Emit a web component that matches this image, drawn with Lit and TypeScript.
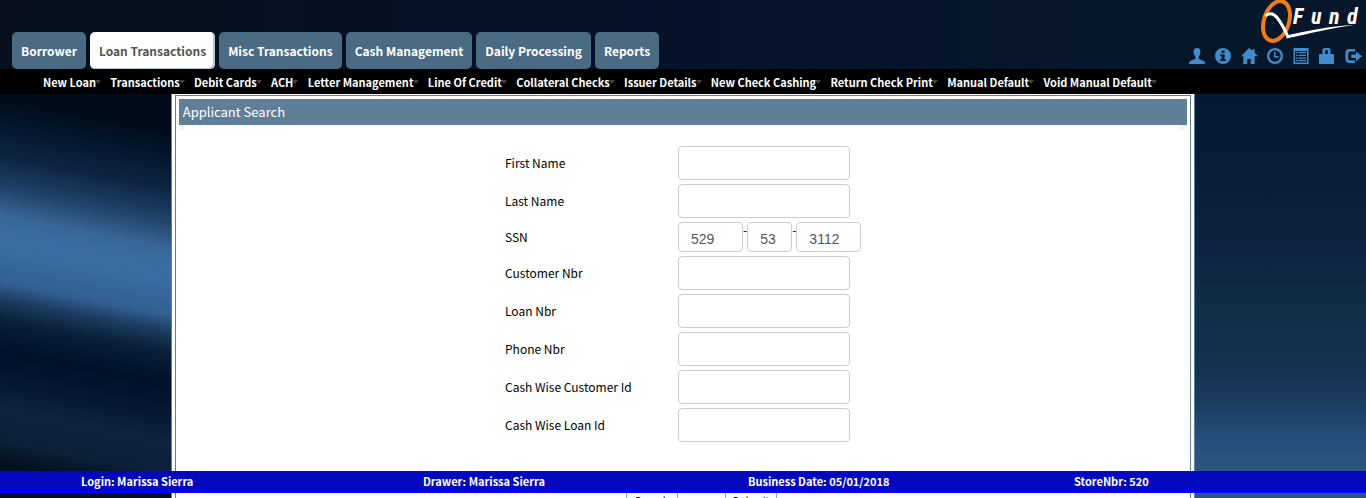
import { LitElement, html, css, svg } from "lit";
import { customElement, state } from "lit/decorators.js";
import { classMap } from "lit/directives/class-map.js";

const TABS = ["Borrower", "Loan Transactions", "Misc Transactions", "Cash Management", "Daily Processing", "Reports"];

const MENU = [
  "New Loan", "Transactions", "Debit Cards", "ACH", "Letter Management", "Line Of Credit",
  "Collateral Checks", "Issuer Details", "New Check Cashing", "Return Check Print",
  "Manual Default", "Void Manual Default",
];

const FIELDS_TOP = [["first", "First Name"], ["last", "Last Name"]];
const FIELDS_BOTTOM = [
  ["customer", "Customer Nbr"],
  ["loan", "Loan Nbr"],
  ["phone", "Phone Nbr"],
  ["cwCustomer", "Cash Wise Customer Id"],
  ["cwLoan", "Cash Wise Loan Id"],
];

const ICONS = [
  { name: "Customer", shape: svg`<path d="M8 0C5.600 0 4.600 1.600 4.600 4c0 2 .7 3.500 1.700 4.600v2.200L1.200 13C.3 13.500 0 14.200 0 16h16c0-1.800-.3-2.500-1.200-3l-5.100-2.200V8.600C10.700 7.500 11.400 6 11.400 4 11.400 1.600 10.400 0 8 0z"/>` },
  { name: "Information", shape: svg`<path fill-rule="evenodd" d="M8 0a8 8 0 1 0 0 16A8 8 0 0 0 8 0zM6.500 2.600h3v2.300h-3zM5 6.200h4.600v5.200H11V13H5v-1.600h1.500V7.800H5z"/>` },
  { name: "Home", shape: svg`<path d="M8 0 0 8.300h2.300V16h4v-5h3.400v5h4V8.300H17l-3.300-3.500V1.300h-2.200v1.400z"/>` },
  { name: "Clock", shape: svg`<path fill-rule="evenodd" d="M8 0a8 8 0 1 0 0 16A8 8 0 0 0 8 0zm0 2.300a5.700 5.700 0 1 1 0 11.400A5.700 5.700 0 0 1 8 2.300zM7 4h1.600v3.900h3.100v1.500H7z"/>` },
  { name: "List", shape: svg`<path fill-rule="evenodd" d="M.5 0h15v16H.5zM2 3v11.500h12V3zM3 4h1.600v1.300H3zm2.600 0H13v1.300H5.600zM3 6.700h1.600V8H3zm2.600 0H13V8H5.600zM3 9.400h1.600v1.300H3zm2.600 0H13v1.300H5.600zM3 12h1.600v1.300H3zm2.600 0H13v1.300H5.600z"/>` },
  { name: "Lock", shape: svg`<path fill-rule="evenodd" d="M5.500 0h4c1.200 0 2 .9 2 2v4h2.500c.7 0 1 .4 1 1v9H0V7c0-.6.300-1 1-1h2.500V2c0-1.100.8-2 2-2zm.5 2.200V6h3V2.200z"/>` },
  { name: "Log out", shape: svg`<path d="M10 1H4.500A4 4 0 0 0 .5 5v6a4 4 0 0 0 4 4H10v-2.500H5A1.800 1.800 0 0 1 3.200 10.700V5.300A1.800 1.800 0 0 1 5 3.500h5zM11 3.400l6 4.900-6 4.900v-3.200H6.400V6.600H11z"/>` },
];

@customElement("app-root")
export class AppRoot extends LitElement {
  @state() private activeTab = "Loan Transactions";

  static styles = css`
    :host {
      display: flex;
      flex-direction: column;
      height: 100vh;
      font-family: "Noto Sans CJK SC", "Noto Sans", sans-serif;
      font-size: 12px;
      line-height: 16px;
      color: #000;
      background:
        linear-gradient(191deg, #000c1a 0, #000c1a 226px, #02142b 246px, #0d2440 282px, #1f3f66 312px,
          #386797 342px, #3a6ea3 368px, #336093 407px, #1b3c60 424px, #0a2038 444px, #00112a 474px,
          #051731 503px, #0f2340 532px, #0c2038 562px, #03101f 586px) 0 0 / 50% 100% no-repeat,
        linear-gradient(180deg, #041a35 94px, #0a2039 200px, #0d2240 240px, #102d48 300px,
          #14334f 370px, #1b3a60 400px, #25507b 440px, #2a5680 470px);
    }
    * { box-sizing: border-box; }
    .header {
      display: flex;
      justify-content: space-between;
      align-items: flex-end;
      flex: none;
      height: 69px;
      padding: 0 4px 0 12px;
      background: linear-gradient(90deg, #060f1b, #05132a 50%, #07182b);
    }
    .tabs { display: flex; gap: 4px; }
    .tab {
      height: 37px;
      padding: 0 9px;
      border: 0;
      border-radius: 5px;
      background: #4b6a84;
      color: #fff;
      font: bold 12px/16px "Noto Sans CJK SC", "Noto Sans", sans-serif;
      white-space: nowrap;
    }
    .tab.active { background: #fff; color: #555; box-shadow: inset -2px -1px #b4c3d0; }
    .brand { display: flex; flex-direction: column; align-items: flex-end; gap: 4px; padding-bottom: 4px; }
    .logo { display: block; width: 104px; height: 44px; }
    .tools { display: flex; gap: 9px; }
    .tool { display: block; width: 17px; height: 17px; }
    .tool svg { display: block; width: 17px; height: 17px; fill: #428bca; }
    .menu { flex: none; background: #000; }
    .entries {
      display: flex;
      justify-content: space-between;
      max-width: 1152px;
      height: 25px;
      padding: 1px 0 0 43px;
    }
    .entry {
      position: relative;
      color: #fff;
      font-size: 11px;
      font-weight: bold;
      line-height: 24px;
      text-decoration: none;
      white-space: nowrap;
    }
    .entry::after {
      content: "";
      position: absolute;
      right: -5px;
      top: 10px;
      border: 3px solid transparent;
      border-top: 4px solid #444;
      border-bottom: 0;
    }
    .content { flex: 1; min-height: 0; overflow-y: auto; scrollbar-width: none; }
    .panel {
      width: 75%;
      min-height: 100%;
      margin: 0 auto;
      padding: 1px 3px 0;
      border: solid #5f7f99;
      border-width: 0 1px;
      background: #fff;
    }
    .inner { min-height: 440px; padding: 3px; border: 1px solid #5f7f99; }
    .title {
      margin: 0;
      padding: 0 4px;
      background: #5f7f99;
      color: #fff;
      font-size: 13px;
      font-weight: normal;
      line-height: 26px;
    }
    .corners { display: flex; justify-content: space-between; padding-right: 3px; }
    .corner { width: 5px; height: 5px; background: #f2f3e6; }
    .form { display: grid; gap: 4px; width: 356px; margin: 16px auto 0; }
    .row { display: grid; grid-template-columns: 173px 1fr; align-items: center; }
    .box {
      width: 172px;
      height: 34px;
      padding: 3px 12px 0;
      border: 1px solid #ccc;
      border-radius: 4px;
      background: #fff;
      color: #555;
      font: 14px "Liberation Sans", Arial, sans-serif;
    }
    .ssn { display: flex; justify-content: space-between; }
    .ssn .box { width: 65px; height: 30px; }
    .ssn .box.short { width: 45px; }
    .actions { display: flex; gap: 47px; padding: 42px 0 20px 121px; }
    .action {
      width: 52px;
      height: 24px;
      padding: 0;
      border: 1px solid #7eaad0;
      background: #fff;
      font: 11px/16px "Noto Sans CJK SC", "Noto Sans", sans-serif;
    }
    .status {
      position: fixed;
      left: 0;
      right: 0;
      bottom: 5px;
      display: grid;
      grid-template-columns: 342fr 325fr 326fr 292fr;
      height: 22px;
      padding: 2px 0 0 81px;
      border-bottom: 4px solid #0000fe;
      background: #0409bd;
      color: #fff;
      font-size: 11px;
      font-weight: bold;
      white-space: nowrap;
    }
  `;

  private field([id, label]: string[]) {
    return html`<div class="row"><label for=${id}>${label}</label><input class="box" id=${id} type="text" /></div>`;
  }

  render() {
    return html`
      <header class="header">
        <nav class="tabs">
          ${TABS.map((t) => html`<button
            class=${classMap({ tab: true, active: t === this.activeTab })}
            @click=${() => (this.activeTab = t)}>${t}</button>`)}
        </nav>
        <div class="brand">
          <svg class="logo" viewBox="0 0 104 44" role="img" aria-label="QFund">
            <ellipse cx="18.500" cy="21" rx="12.500" ry="20.500" transform="rotate(18 18.500 21)" fill="none" stroke="#ee7d17" stroke-width="4"/>
            <path d="M7.500 16C10 13 15 12.500 19 17.500S27 30 30 37" fill="none" stroke="#fff" stroke-width="3"/>
            <path d="M28.500 38.500L28.500 35.500C50 31 70 26 97 25C72 28 50 34 28.500 38.500Z" fill="#fff"/>
            <text x="35 53 71 89" y="24" fill="#fff" font-family="Roboto Condensed, Roboto, sans-serif" font-size="22" font-weight="700" font-style="italic">Fund</text>
          </svg>
          <div class="tools">
            ${ICONS.map((i) => html`<a class="tool" href="#" aria-label=${i.name}><svg viewBox="0 0 17 17">${i.shape}</svg></a>`)}
          </div>
        </div>
      </header>
      <nav class="menu">
        <div class="entries">${MENU.map((m) => html`<a class="entry" href="#">${m}</a>`)}</div>
      </nav>
      <main class="content">
        <section class="panel">
          <div class="inner">
            <h1 class="title">Applicant Search</h1>
            <div class="corners"><span class="corner"></span><span class="corner"></span></div>
            <form class="form" @submit=${(e: Event) => e.preventDefault()}>
              ${FIELDS_TOP.map((f) => this.field(f))}
              <div class="row">
                <label for="ssn">SSN</label>
                <div class="ssn">
                  <input class="box" id="ssn" type="text" value="529" /><span>-</span>
                  <input class="box short" aria-label="SSN middle digits" type="text" value="53" /><span>-</span>
                  <input class="box" aria-label="SSN last digits" type="text" value="3112" />
                </div>
              </div>
              ${FIELDS_BOTTOM.map((f) => this.field(f))}
              <div class="actions">
                <button class="action" type="button">Search</button>
                <button class="action" type="submit">Submit</button>
              </div>
            </form>
          </div>
        </section>
      </main>
      <footer class="status">
        <span>Login: Marissa Sierra</span>
        <span>Drawer: Marissa Sierra</span>
        <span>Business Date: 05/01/2018</span>
        <span>StoreNbr: 520</span>
      </footer>
    `;
  }
}
